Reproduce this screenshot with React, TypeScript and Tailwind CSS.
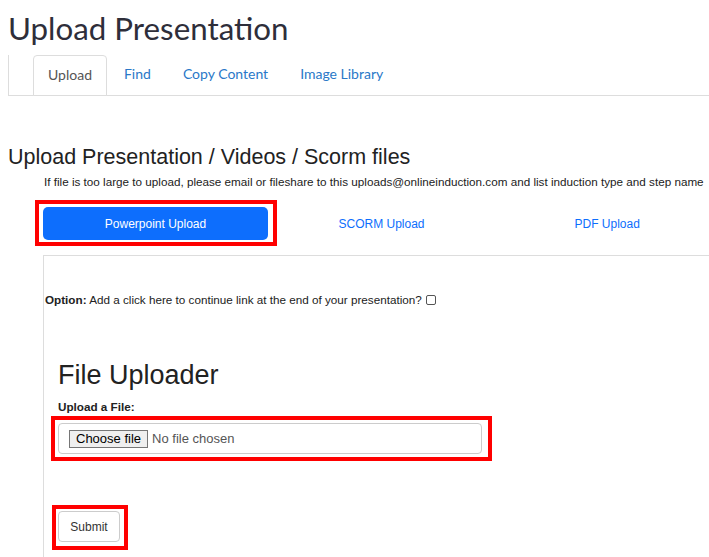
const sans = "font-['Liberation_Sans',Arial,sans-serif]";

function RedMark({ className }: { className: string }) {
  return <div className={`pointer-events-none absolute border-4 border-[#f00] ${className}`} />;
}

const tabs = ["Upload", "Find", "Copy Content", "Image Library"];

export default function App() {
  return (
    <div className="relative h-[557px] w-[709px] overflow-hidden bg-white text-[#333]">
      {/* HEADER */}
      <h1 className="pl-[8px] pt-[9px] font-['Lato',sans-serif] text-[31.3px] leading-[38px] text-[#2e2e3a]">
        Upload Presentation
      </h1>

      {/* TABS */}
      <nav className="ml-[8px] mt-[8px] flex h-[41px] border-b border-l border-[#ddd] pl-[24px] font-['Lato',sans-serif] text-[14px]">
        {tabs.map((t, i) => (
          <span
            key={t}
            className={
              i === 0
                ? "-mb-px flex items-center rounded-t-[4px] border border-b-dashed border-[#ddd] bg-white px-[14px] pb-[3px] text-[#555]"
                : "ml-[2px] flex items-center px-[15px] pb-[3px] text-[#2a78c8]"
            }
          >
            {t}
          </span>
        ))}
      </nav>

      {/* SECTION */}
      <h2 className={`mt-[48px] pl-[8px] ${sans} text-[21.5px] leading-[26px] text-[#222]`}>
        Upload Presentation / Videos / Scorm files
      </h2>
      <div className={`ml-[44px] mt-[5px] whitespace-nowrap ${sans} text-[11.7px] leading-[14px] text-[#222]`}>
        If file is too large to upload, please email or fileshare to this uploads@onlineinduction.com and list induction type and step name
      </div>

      {/* UPLOAD TYPE BUTTONS */}
      <div className={`ml-[43px] mt-[18px] grid w-[677px] grid-cols-3 ${sans} text-[12px]`}>
        <div className="relative">
          <button className="h-[33px] w-[225px] rounded-[5px] bg-[#0d6efd] text-white">Powerpoint Upload</button>
          <RedMark className="-left-[8px] -right-[8px] -top-[7px] -bottom-[6px]" />
        </div>
        <button className="h-[33px] text-[#0d6efd]">SCORM Upload</button>
        <button className="h-[33px] text-[#0d6efd]">PDF Upload</button>
      </div>

      {/* PANEL */}
      <div className={`ml-[43px] mt-[15px] h-[320px] w-[700px] border-l border-t border-[#ddd] ${sans} text-[11.7px] text-[#222]`}>
        <div className="flex items-center pl-[1px] pt-[35px]">
          <span>
            <b>Option:</b> Add a click here to continue link at the end of your presentation?
          </span>
          <span className="ml-[4px] h-[10px] w-[10px] rounded-[2px] border border-[#555] bg-white" />
        </div>

        <div className="pl-[14px]">
          <div className="mt-[50px] text-[27px] leading-[32px] text-[#222]">File Uploader</div>
          <div className="mt-[7px] font-bold">Upload a File:</div>
          <div className="relative mt-[8px] w-[424px]">
            <div className="flex h-[31px] items-center rounded-[4px] border border-[#ccc] pl-[10px] text-[13px] text-[#555]">
              <span className="border border-[#767676] bg-[#efefef] px-[6px] leading-[16px] text-black">Choose file</span>
              <span className="ml-[4px]">No file chosen</span>
            </div>
            <RedMark className="-left-[7px] -right-[10px] -top-[7px] -bottom-[7px]" />
          </div>

          <div className="relative mt-[57px] w-fit">
            <button className="h-[31px] w-[62px] rounded-[4px] border border-[#ccc] bg-white text-[12px] text-[#333]">
              Submit
            </button>
            <RedMark className="-left-[6px] -right-[8px] -top-[6px] -bottom-[8px]" />
          </div>
        </div>
      </div>
    </div>
  );
}
